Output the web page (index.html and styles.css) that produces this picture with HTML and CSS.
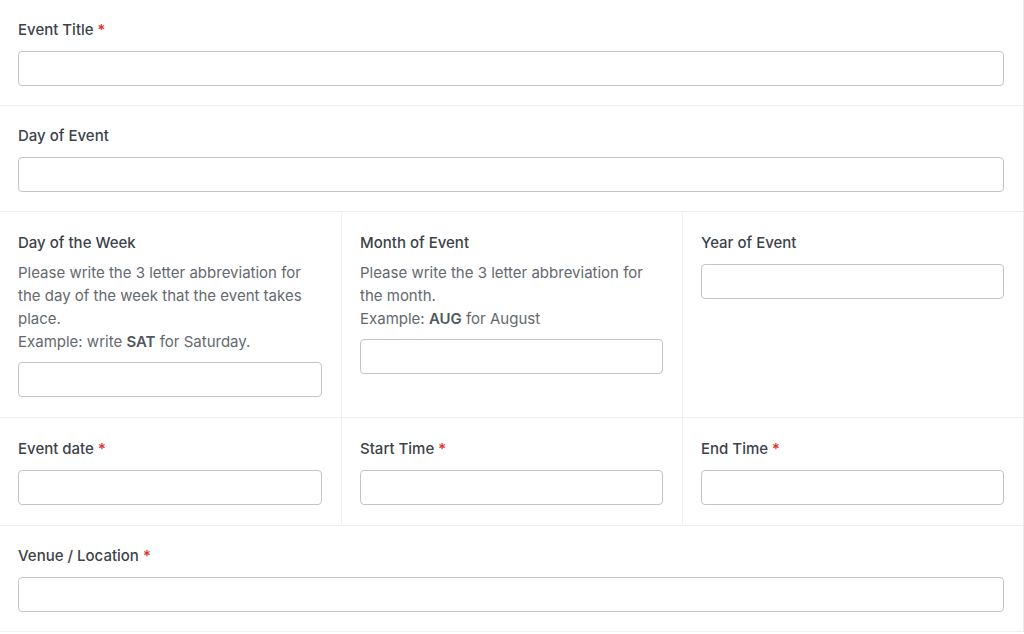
FILE: index.html
```html
<!DOCTYPE html>
<html lang="en">
<head>
  <meta charset="UTF-8">
  <meta name="viewport" content="width=device-width, initial-scale=1.0">
  <title>Event form</title>
  <link rel="stylesheet" href="styles.css">
</head>
<body>
  <form class="event-form">
    <div class="row">
      <div class="field">
        <label>Event Title <span class="req">*</span></label>
        <input type="text">
      </div>
    </div>

    <div class="row">
      <div class="field">
        <label>Day of Event</label>
        <input type="text">
      </div>
    </div>

    <div class="row cols">
      <div class="field">
        <label>Day of the Week</label>
        <p class="desc">Please write the 3 letter abbreviation for the day of the week that the event takes place.<br>Example: write <strong>SAT</strong> for Saturday.</p>
        <input type="text">
      </div>
      <div class="field">
        <label>Month of Event</label>
        <p class="desc">Please write the 3 letter abbreviation for the month.<br>Example: <strong>AUG</strong> for August</p>
        <input type="text">
      </div>
      <div class="field">
        <label>Year of Event</label>
        <input type="text">
      </div>
    </div>

    <div class="row cols">
      <div class="field">
        <label>Event date <span class="req">*</span></label>
        <input type="text">
      </div>
      <div class="field">
        <label>Start Time <span class="req">*</span></label>
        <input type="text">
      </div>
      <div class="field">
        <label>End Time <span class="req">*</span></label>
        <input type="text">
      </div>
    </div>

    <div class="row">
      <div class="field">
        <label>Venue / Location <span class="req">*</span></label>
        <input type="text">
      </div>
    </div>
  </form>
</body>
</html>
```

FILE: styles.css
```css
body {
  margin: 0;
  background: #fff;
  font-family: Inter, "Liberation Sans", sans-serif;
  font-size: 15px;
  color: #3c434a;
}
.event-form {
  border-right: 1px solid #ebebeb;
}
.row {
  border-bottom: 1px solid #f0f0f1;
}
.row.cols {
  display: grid;
  grid-template-columns: 341px 341px 1fr;
}
.field {
  padding: 20px 19px 19px 18px;
}
.row.cols .field {
  padding-top: 21px;
  padding-bottom: 20px;
}
.row.cols .field + .field {
  border-left: 1px solid #f0f0f1;
  padding-left: 18px;
}
label {
  display: block;
  font-weight: 500;
  line-height: 20px;
  margin-bottom: 11px;
  color: #3c434a;
}
.req { color: #e02b2b; }
.desc {
  margin: -3px 0 9px;
  line-height: 23px;
  color: #646970;
}
.desc strong { color: #50575e; font-weight: 600; }
input {
  display: block;
  width: 100%;
  height: 35px;
  box-sizing: border-box;
  border: 1px solid #c3c4c7;
  border-radius: 4px;
  background: #fff;
  padding: 0 8px;
  font-size: 14px;
}
```
